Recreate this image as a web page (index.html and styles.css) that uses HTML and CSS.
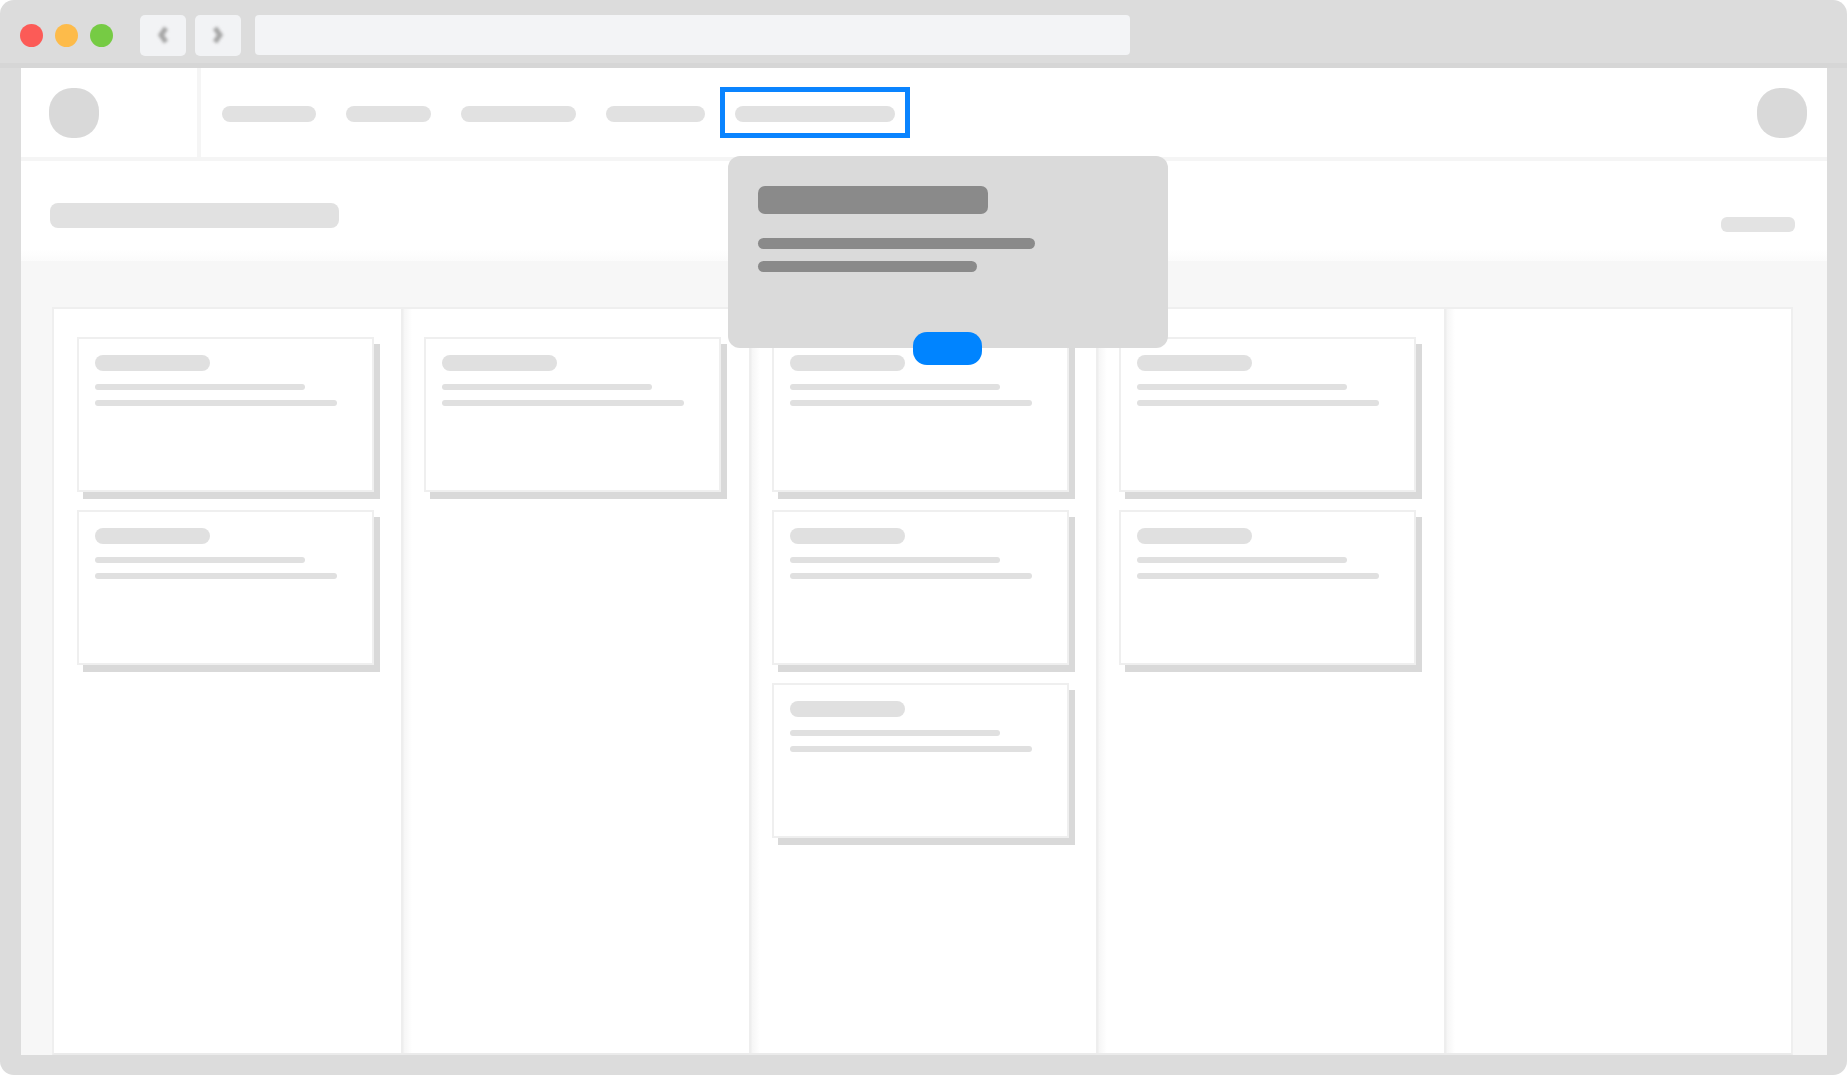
FILE: index.html
```html
<!DOCTYPE html>
<html lang="en">
<head>
  <meta charset="UTF-8" />
  <title>Board wireframe</title>
  <link rel="stylesheet" href="styles.css">
</head>
<body>
  <div class="window">
    <div class="toolbar">
      <span class="light red"></span>
      <span class="light amber"></span>
      <span class="light green"></span>
      <div class="nav-btn">
        <svg width="14" height="22" viewBox="0 0 14 22"><polyline points="10,4 5,11 10,18" /></svg>
      </div>
      <div class="nav-btn">
        <svg width="14" height="22" viewBox="0 0 14 22"><polyline points="4,4 9,11 4,18" /></svg>
      </div>
      <div class="address"></div>
    </div>

    <div class="page">
      <header class="topbar">
        <div class="logo-cell"><div class="logo"></div></div>
        <nav class="menu">
          <div class="menu-item"><span class="pill" style="width: 94px"></span></div>
          <div class="menu-item"><span class="pill" style="width: 85px"></span></div>
          <div class="menu-item"><span class="pill" style="width: 115px"></span></div>
          <div class="menu-item"><span class="pill" style="width: 99px"></span></div>
          <div class="menu-item active"><span class="pill" style="width: 160px"></span></div>
        </nav>
        <div class="avatar"></div>
      </header>

      <div class="subheader">
        <span class="page-title"></span>
        <span class="action"></span>
      </div>

      <div class="board-area">
        <div class="board">
          <div class="column">
            <div class="card"><span class="card-title"></span><span class="line short"></span><span class="line"></span></div>
            <div class="card"><span class="card-title"></span><span class="line short"></span><span class="line"></span></div>
          </div>
          <div class="column">
            <div class="card"><span class="card-title"></span><span class="line short"></span><span class="line"></span></div>
          </div>
          <div class="column">
            <div class="card"><span class="card-title"></span><span class="line short"></span><span class="line"></span></div>
            <div class="card"><span class="card-title"></span><span class="line short"></span><span class="line"></span></div>
            <div class="card"><span class="card-title"></span><span class="line short"></span><span class="line"></span></div>
          </div>
          <div class="column">
            <div class="card"><span class="card-title"></span><span class="line short"></span><span class="line"></span></div>
            <div class="card"><span class="card-title"></span><span class="line short"></span><span class="line"></span></div>
          </div>
          <div class="column"></div>
        </div>
      </div>
    </div>

    <!-- onboarding tip pointing at the highlighted menu item -->
    <div class="tip">
      <span class="tip-title"></span>
      <span class="tip-line"></span>
      <span class="tip-line short"></span>
      <span class="tip-btn"></span>
    </div>
  </div>
</body>
</html>
```

FILE: styles.css
```css
* {
  margin: 0;
  padding: 0;
  box-sizing: border-box;
  font-family: 'Liberation Sans', sans-serif;
}

body {
  background: #ffffff;
  width: 1848px;
  height: 1080px;
  overflow: hidden;
}

.window {
  position: relative;
  width: 1847px;
  height: 1075px;
  background: #dcdcdc;
  border-radius: 14px;
  padding: 0 20px 20px 21px;
  display: flex;
  flex-direction: column;
}

.toolbar {
  height: 68px;
  margin: 0 -20px 0 -21px;
  padding: 7px 0 0 20px;
  display: flex;
  align-items: center;
  border-bottom: 5px solid #d6d6d6;
}

.light {
  width: 23px;
  height: 23px;
  border-radius: 50%;
  margin-right: 12px;
}

.red { background: #fc5b57; }
.amber { background: #fdbb4a; }
.green { background: #76cb44; }

.light.green { margin-right: 27px; }

.nav-btn {
  width: 46px;
  height: 41px;
  background: #f2f3f5;
  border-radius: 5px;
  margin-right: 9px;
  display: flex;
  align-items: center;
  justify-content: center;
}

.nav-btn svg {
  fill: none;
  stroke: #a6a6a6;
  stroke-width: 5;
  filter: blur(1.8px);
}

.address {
  width: 875px;
  height: 40px;
  margin-left: 5px;
  background: #f3f4f6;
  border-radius: 4px;
}

.page {
  flex: 1;
  background: #ffffff;
  display: flex;
  flex-direction: column;
}

.topbar {
  height: 93px;
  display: flex;
  align-items: center;
  border-bottom: 4px solid #f5f5f5;
}

.logo-cell {
  width: 180px;
  height: 100%;
  border-right: 4px solid #f5f5f5;
  padding: 20px 0 0 28px;
}

.logo, .avatar {
  width: 50px;
  height: 50px;
  border-radius: 23px;
  background: #d9d9d9;
}

.menu {
  flex: 1;
  display: flex;
  align-items: center;
  padding-left: 6px;
}

.menu-item {
  border: 5px solid transparent;
  padding: 14px 10px 11px;
  display: flex;
}

.menu-item.active {
  border-color: #0a84ff;
}

.pill {
  display: block;
  height: 16px;
  border-radius: 8px;
  background: #e1e1e1;
}

.avatar {
  margin-right: 20px;
}

.subheader {
  height: 100px;
  display: flex;
  justify-content: space-between;
  padding: 0 32px 0 29px;
  background: linear-gradient(to bottom, #ffffff 88%, #fbfbfb 100%);
}

.page-title {
  margin-top: 42px;
  width: 289px;
  height: 25px;
  border-radius: 8px;
  background: #e1e1e1;
}

.action {
  margin-top: 56px;
  width: 74px;
  height: 15px;
  border-radius: 6px;
  background: #e3e3e3;
}

.board-area {
  flex: 1;
  background: #f7f7f7;
  padding: 46px 34px 0 31px;
  display: flex;
}

.board {
  flex: 1;
  display: grid;
  grid-template-columns: repeat(5, 1fr);
  background: #ffffff;
  border: 2px solid #efefef;
  border-bottom-color: #ebebeb;
}

.column {
  padding: 28px 0 0 23px;
  display: flex;
  flex-direction: column;
  gap: 18px;
}

.column + .column {
  background: linear-gradient(to right, #eeeeee 0, #eeeeee 2px, #f6f6f6 3px, #ffffff 11px);
}

.card {
  width: 297px;
  height: 155px;
  background: #ffffff;
  border: 2px solid #efefef;
  box-shadow: 6px 7px 0 #d9d9d9;
  padding: 16px 0 0 16px;
  display: flex;
  flex-direction: column;
}

.card-title {
  width: 115px;
  height: 16px;
  border-radius: 8px;
  background: #e0e0e0;
  margin-bottom: 13px;
}

.line {
  width: 242px;
  height: 6px;
  border-radius: 3px;
  background: #e0e0e0;
  margin-bottom: 10px;
}

.line.short {
  width: 210px;
}

.tip {
  position: absolute;
  left: 728px;
  top: 156px;
  width: 440px;
  height: 192px;
  background: #dadada;
  border-radius: 12px;
  padding: 30px 0 0 30px;
  display: flex;
  flex-direction: column;
  z-index: 2;
}

.tip-title {
  width: 230px;
  height: 28px;
  border-radius: 7px;
  background: #8a8a8a;
  margin-bottom: 24px;
}

.tip-line {
  width: 277px;
  height: 11px;
  border-radius: 6px;
  background: #8a8a8a;
  margin-bottom: 12px;
}

.tip-line.short {
  width: 219px;
}

.tip-btn {
  position: absolute;
  left: 185px;
  bottom: -17px;
  width: 69px;
  height: 33px;
  border-radius: 14px;
  background: #0084ff;
}
```
